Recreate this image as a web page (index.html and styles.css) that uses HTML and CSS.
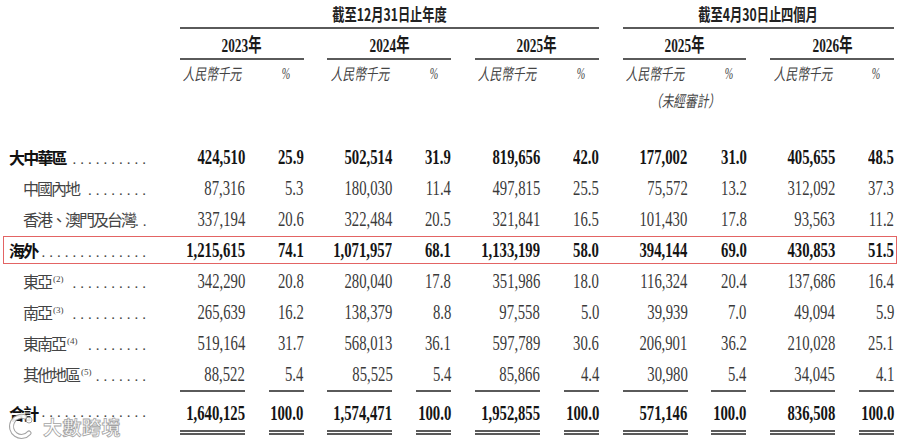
FILE: index.html
```html
<!DOCTYPE html>
<html lang="zh-Hant">
<head>
<meta charset="utf-8">
<link rel="stylesheet" href="styles.css">
</head>
<body>
<div class="page">
  <div class="grid head">
    <div class="h1 g13"><span>截至12月31日止年度</span></div>
    <div class="h1 g45"><span>截至4月30日止四個月</span></div>

    <div class="yr y1"><span>2023年</span></div>
    <div class="yr y2"><span>2024年</span></div>
    <div class="yr y3"><span>2025年</span></div>
    <div class="yr y4"><span>2025年</span></div>
    <div class="yr y5"><span>2026年</span></div>

    <div class="unit c2"><span>人民幣千元</span></div>
    <div class="pcth c3"><span>%</span></div>
    <div class="unit c4"><span>人民幣千元</span></div>
    <div class="pcth c5"><span>%</span></div>
    <div class="unit c6"><span>人民幣千元</span></div>
    <div class="pcth c7"><span>%</span></div>
    <div class="unit2 c8"><span>人民幣千元</span><span>（未經審計）</span></div>
    <div class="pcth c9"><span>%</span></div>
    <div class="unit c10"><span>人民幣千元</span></div>
    <div class="pcth c11"><span>%</span></div>
  </div>

  <div class="rows">
    <div class="grid row bold">
      <div class="lab"><span class="t">大中華區</span><span class="dots">..........</span></div>
      <div class="n"><span>424,510</span></div><div class="n"><span>25.9</span></div>
      <div class="n"><span>502,514</span></div><div class="n"><span>31.9</span></div>
      <div class="n"><span>819,656</span></div><div class="n"><span>42.0</span></div>
      <div class="n"><span>177,002</span></div><div class="n"><span>31.0</span></div>
      <div class="n"><span>405,655</span></div><div class="n"><span>48.5</span></div>
    </div>
    <div class="grid row sub">
      <div class="lab"><span class="t">中國內地</span><span class="dots">........</span></div>
      <div class="n"><span>87,316</span></div><div class="n"><span>5.3</span></div>
      <div class="n"><span>180,030</span></div><div class="n"><span>11.4</span></div>
      <div class="n"><span>497,815</span></div><div class="n"><span>25.5</span></div>
      <div class="n"><span>75,572</span></div><div class="n"><span>13.2</span></div>
      <div class="n"><span>312,092</span></div><div class="n"><span>37.3</span></div>
    </div>
    <div class="grid row sub">
      <div class="lab"><span class="t">香港、澳門及台灣</span><span class="dots">..</span></div>
      <div class="n"><span>337,194</span></div><div class="n"><span>20.6</span></div>
      <div class="n"><span>322,484</span></div><div class="n"><span>20.5</span></div>
      <div class="n"><span>321,841</span></div><div class="n"><span>16.5</span></div>
      <div class="n"><span>101,430</span></div><div class="n"><span>17.8</span></div>
      <div class="n"><span>93,563</span></div><div class="n"><span>11.2</span></div>
    </div>
    <div class="grid row bold hl">
      <div class="lab"><span class="t">海外</span><span class="dots">..............</span></div>
      <div class="n"><span>1,215,615</span></div><div class="n"><span>74.1</span></div>
      <div class="n"><span>1,071,957</span></div><div class="n"><span>68.1</span></div>
      <div class="n"><span>1,133,199</span></div><div class="n"><span>58.0</span></div>
      <div class="n"><span>394,144</span></div><div class="n"><span>69.0</span></div>
      <div class="n"><span>430,853</span></div><div class="n"><span>51.5</span></div>
    </div>
    <div class="grid row sub">
      <div class="lab"><span class="t">東亞<sup>(2)</sup></span><span class="dots">..........</span></div>
      <div class="n"><span>342,290</span></div><div class="n"><span>20.8</span></div>
      <div class="n"><span>280,040</span></div><div class="n"><span>17.8</span></div>
      <div class="n"><span>351,986</span></div><div class="n"><span>18.0</span></div>
      <div class="n"><span>116,324</span></div><div class="n"><span>20.4</span></div>
      <div class="n"><span>137,686</span></div><div class="n"><span>16.4</span></div>
    </div>
    <div class="grid row sub">
      <div class="lab"><span class="t">南亞<sup>(3)</sup></span><span class="dots">..........</span></div>
      <div class="n"><span>265,639</span></div><div class="n"><span>16.2</span></div>
      <div class="n"><span>138,379</span></div><div class="n"><span>8.8</span></div>
      <div class="n"><span>97,558</span></div><div class="n"><span>5.0</span></div>
      <div class="n"><span>39,939</span></div><div class="n"><span>7.0</span></div>
      <div class="n"><span>49,094</span></div><div class="n"><span>5.9</span></div>
    </div>
    <div class="grid row sub">
      <div class="lab"><span class="t">東南亞<sup>(4)</sup></span><span class="dots">........</span></div>
      <div class="n"><span>519,164</span></div><div class="n"><span>31.7</span></div>
      <div class="n"><span>568,013</span></div><div class="n"><span>36.1</span></div>
      <div class="n"><span>597,789</span></div><div class="n"><span>30.6</span></div>
      <div class="n"><span>206,901</span></div><div class="n"><span>36.2</span></div>
      <div class="n"><span>210,028</span></div><div class="n"><span>25.1</span></div>
    </div>
    <div class="grid row sub">
      <div class="lab"><span class="t">其他地區<sup>(5)</sup></span><span class="dots">.......</span></div>
      <div class="n"><span>88,522</span></div><div class="n"><span>5.4</span></div>
      <div class="n"><span>85,525</span></div><div class="n"><span>5.4</span></div>
      <div class="n"><span>85,866</span></div><div class="n"><span>4.4</span></div>
      <div class="n"><span>30,980</span></div><div class="n"><span>5.4</span></div>
      <div class="n"><span>34,045</span></div><div class="n"><span>4.1</span></div>
    </div>
    <div class="grid row bold total">
      <div class="lab"><span class="t">合計</span><span class="dots">..............</span></div>
      <div class="n"><span>1,640,125</span></div><div class="n"><span>100.0</span></div>
      <div class="n"><span>1,574,471</span></div><div class="n"><span>100.0</span></div>
      <div class="n"><span>1,952,855</span></div><div class="n"><span>100.0</span></div>
      <div class="n"><span>571,146</span></div><div class="n"><span>100.0</span></div>
      <div class="n"><span>836,508</span></div><div class="n"><span>100.0</span></div>
    </div>
  </div>

  <div class="wm">
    <svg class="logo" width="26" height="28" viewBox="0 0 26 28">
      <path d="M16 5 A10 10 0 1 0 20 21" fill="none" stroke="#9a9a9a" stroke-width="5" stroke-linecap="round"/>
      <path d="M16 5 A10 10 0 1 0 20 21" fill="none" stroke="#ffffff" stroke-width="3" stroke-linecap="round"/>
      <circle cx="20" cy="8" r="3" fill="#fff" stroke="#9a9a9a" stroke-width="1"/>
    </svg>
    <span class="wmt">大數跨境</span>
  </div>
</div>
</body>
</html>
```

FILE: styles.css
```css
html, body {
  margin: 0;
  padding: 0;
  background: #ffffff;
}

.page {
  position: relative;
  width: 900px;
  height: 442px;
  overflow: hidden;
  font-family: "Noto Sans CJK TC", "Noto Sans", sans-serif;
  color: #222;
}

.grid {
  display: grid;
  grid-template-columns: 147px repeat(5, 65px 35px);
  column-gap: 23.8px;
  padding-left: 9px;
}

/* ---------- header ---------- */
.head {
  grid-template-rows: 29px 31px auto;
}

.h1 {
  grid-row: 1;
  height: 27px;
  border-bottom: 2px solid #5a5a5a;
  display: flex;
  justify-content: center;
  align-items: center;
}
.h1 span {
  display: inline-block;
  flex-shrink: 0;
  white-space: nowrap;
  font-family: "Noto Sans CJK TC", sans-serif;
  font-weight: 700;
  font-size: 17px;
  line-height: 1;
  color: #222;
  transform: scaleX(0.72);
}
.g13 { grid-column: 2 / 8; }
.g45 { grid-column: 8 / 12; }

.yr {
  grid-row: 2;
  height: 26px;
  padding-top: 3px;
  border-bottom: 2px solid #5a5a5a;
  display: flex;
  justify-content: center;
  align-items: center;
}
.yr span {
  display: inline-block;
  white-space: nowrap;
  font-family: "Liberation Serif", "Noto Sans CJK TC", serif;
  font-weight: 700;
  font-size: 19px;
  line-height: 1;
  color: #1a1a1a;
  transform: scaleX(0.7);
}
.y1 { grid-column: 2 / 4; }
.y2 { grid-column: 4 / 6; }
.y3 { grid-column: 6 / 8; }
.y4 { grid-column: 8 / 10; }
.y5 { grid-column: 10 / 12; }

.unit, .pcth, .unit2 {
  grid-row: 3;
  display: flex;
  flex-direction: column;
  align-items: center;
}
.unit span, .unit2 span, .pcth span {
  display: block;
  flex-shrink: 0;
  white-space: nowrap;
  font-style: italic;
  font-size: 16px;
  line-height: 27px;
  color: #444;
  transform: scaleX(0.73);
}
.pcth span {
  font-family: "Liberation Serif", serif;
  font-size: 17px;
  transform: scaleX(0.6);
}
.unit2 {
  grid-column: 8 / 10;
  justify-self: start;
  width: 65px;
}
.unit2 span:last-child {
  margin-left: 59px;
}
.c2 { grid-column: 2; }
.c3 { grid-column: 3; }
.c4 { grid-column: 4; }
.c5 { grid-column: 5; }
.c6 { grid-column: 6; }
.c7 { grid-column: 7; }
.c8 { grid-column: 8; }
.c9 { grid-column: 9; }
.c10 { grid-column: 10; }
.c11 { grid-column: 11; }

/* ---------- body rows ---------- */
.rows {
  margin-top: 27.5px;
}

.row {
  position: relative;
  height: 31px;
  align-items: center;
}

.lab {
  display: flex;
  align-items: baseline;
  padding-right: 6px;
  min-width: 0;
}
.lab .t {
  flex-shrink: 0;
  white-space: nowrap;
  font-size: 16px;
  letter-spacing: -1.8px;
  line-height: 31px;
}
.lab sup {
  font-family: "Liberation Serif", serif;
  font-size: 9px;
  line-height: 1;
  letter-spacing: 0;
  vertical-align: 6px;
  margin-left: 2px;
  margin-right: 2px;
}
.dots {
  flex: 1;
  white-space: nowrap;
  text-align: right;
  font-family: "Liberation Serif", serif;
  font-size: 15px;
  letter-spacing: 4px;
  color: #444;
}

.sub .lab {
  padding-left: 14px;
}
.sub .lab .t {
  color: #444;
  font-weight: 400;
  letter-spacing: -2px;
}
.bold .lab .t {
  color: #111;
  font-weight: 700;
}

.n {
  display: flex;
  justify-content: flex-end;
  align-items: center;
  height: 31px;
}
.n span {
  display: inline-block;
  flex-shrink: 0;
  white-space: nowrap;
  font-family: "Liberation Serif", serif;
  font-size: 21px;
  line-height: 1;
  color: #3a3a3a;
  transform: scaleX(0.7);
  transform-origin: 100% 50%;
}
.bold .n span {
  font-weight: 700;
  color: #151515;
}

/* highlighted row */
.hl::after {
  content: "";
  position: absolute;
  left: 3px;
  right: 3px;
  top: 1px;
  bottom: 2px;
  border: 1.5px solid #e36464;
  pointer-events: none;
}

/* total row */
.total {
  height: auto;
  margin-top: 0.5px;
  align-items: stretch;
}
.total .lab {
  align-items: center;
}
.total .lab .t {
  line-height: 1;
}
.total .dots {
  line-height: 1;
  align-self: center;
}
.total .n {
  height: 34px;
  padding-top: 4px;
  border-top: 2px solid #5a5a5a;
  border-bottom: 5px double #5a5a5a;
}

/* watermark */
.wm {
  position: absolute;
  left: 9px;
  top: 412px;
  display: flex;
  align-items: center;
  gap: 8px;
  opacity: 0.9;
}
.wmt {
  font-family: "Noto Sans CJK TC", sans-serif;
  font-weight: 700;
  font-size: 19px;
  line-height: 1;
  color: #ffffff;
  -webkit-text-stroke: 0.8px #9a9a9a;
  letter-spacing: 0.5px;
}
```
